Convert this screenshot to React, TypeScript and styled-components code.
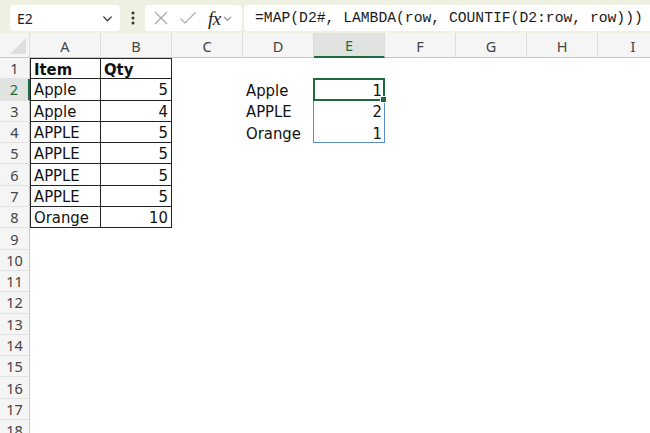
import React from 'react'
import styled, { createGlobalStyle } from 'styled-components'

const GlobalStyle = createGlobalStyle`
  html, body {
    margin: 0;
    padding: 0;
    background: #ffffff;
  }
  body {
    width: 650px;
    height: 433px;
    overflow: hidden;
  }
`

const UI_FONT = `"Noto Sans", "Open Sans", "Liberation Sans", sans-serif`
const CELL_FONT = `"Liberation Sans Narrow", "DejaVu Sans Condensed", "Roboto", sans-serif`

const COL_W = 71
const ROW_H = 21.3
const GREEN = '#1d6b3e'

const Page = styled.div`
  width: 650px;
  height: 433px;
  overflow: hidden;
  display: flex;
  flex-direction: column;
  background: #fff;
`

const Toolbar = styled.div`
  height: 33px;
  flex: none;
  display: flex;
  align-items: flex-start;
  padding: 5px 0 0 10px;
  box-sizing: border-box;
  background: #eef0e2;
`

const Box = styled.div<{ $w?: number }>`
  height: 26px;
  box-sizing: border-box;
  background: #ffffff;
  border-radius: 4px;
  display: flex;
  align-items: center;
  ${(p) => (p.$w ? `width: ${p.$w}px; flex: none;` : 'flex: 1; border-radius: 4px 0 0 4px;')}
`

const NameBox = styled(Box)`
  justify-content: space-between;
  padding: 0 6px 0 7px;
  font-family: ${UI_FONT};
  font-size: 14px;
  color: #222;
`

const Dots = styled.div`
  width: 25px;
  flex: none;
  height: 26px;
  display: flex;
  align-items: center;
  justify-content: center;
`

const FxBox = styled(Box)`
  padding: 0 4px 0 8px;
  gap: 10px;
  margin-right: 2px;
`

const FxGroup = styled.span`
  display: flex;
  align-items: center;
  gap: 1px;
`

const FxLabel = styled.span`
  font-family: "Liberation Serif", serif;
  font-style: italic;
  font-size: 19px;
  color: #222;
  margin-left: 1px;
  letter-spacing: -0.5px;
  line-height: 1;
`

const FormulaBox = styled(Box)`
  padding-left: 11px;
  font-family: "Liberation Mono", "DejaVu Sans Mono", monospace;
  font-size: 14.7px;
  color: #1a1a1a;
  white-space: nowrap;
  overflow: hidden;
`

const Sheet = styled.div`
  flex: 1;
  display: grid;
  grid-template-columns: 30px repeat(9, ${COL_W}px);
  grid-template-rows: 25px;
  grid-auto-rows: ${ROW_H}px;
  overflow: hidden;
`

const Corner = styled.div`
  background: #f5f5f5;
  border-bottom: 1px solid #c8c8c8;
  border-right: 1px solid #dcdcdc;
  box-sizing: border-box;
  position: relative;
  &::after {
    content: '';
    position: absolute;
    right: 3px;
    bottom: 3px;
    border-style: solid;
    border-width: 0 0 16px 16px;
    border-color: transparent transparent #dedede transparent;
  }
`

const ColHead = styled.div<{ $active?: boolean }>`
  box-sizing: border-box;
  display: flex;
  align-items: center;
  justify-content: center;
  font-family: ${UI_FONT};
  font-size: 14.5px;
  padding-top: 1px;
  background: ${(p) => (p.$active ? '#e1e3e1' : '#f5f5f5')};
  color: ${(p) => (p.$active ? GREEN : '#444')};
  border-right: 1px solid #dcdcdc;
  border-bottom: ${(p) => (p.$active ? `2px solid ${GREEN}` : '1px solid #c8c8c8')};
`

const RowHead = styled.div<{ $active?: boolean }>`
  box-sizing: border-box;
  display: flex;
  align-items: center;
  justify-content: center;
  font-family: ${UI_FONT};
  font-size: 14.5px;
  background: ${(p) => (p.$active ? '#e1e3e1' : '#f5f5f5')};
  color: ${(p) => (p.$active ? GREEN : '#444')};
  border-bottom: 1px solid #e2e2e2;
  border-right: ${(p) => (p.$active ? `2px solid ${GREEN}` : '1px solid #c8c8c8')};
`

const Cell = styled.div<{ $align?: 'left' | 'right'; $bold?: boolean; $table?: boolean; $top?: boolean; $left?: boolean }>`
  position: relative;
  box-sizing: border-box;
  display: flex;
  align-items: center;
  justify-content: ${(p) => (p.$align === 'right' ? 'flex-end' : 'flex-start')};
  padding: 1px 3px 0 3px;
  font-family: ${CELL_FONT};
  font-size: 16.5px;
  font-weight: ${(p) => (p.$bold ? 700 : 400)};
  color: #111;
  white-space: nowrap;
  ${(p) =>
    p.$table &&
    `
    border-right: 1px solid #222;
    border-bottom: 1px solid #222;
    ${p.$top ? 'border-top: 1px solid #222;' : ''}
    ${p.$left ? 'border-left: 1px solid #222;' : ''}
  `}
`

const Spill = styled.div`
  position: absolute;
  left: -1px;
  top: -1px;
  width: ${COL_W + 1}px;
  height: ${ROW_H * 3 + 1}px;
  border: 1px solid #5b8bd0;
  box-sizing: border-box;
  pointer-events: none;
`

const Selected = styled.div`
  position: absolute;
  left: -1px;
  top: -1px;
  width: ${COL_W + 1}px;
  height: ${ROW_H + 1}px;
  border: 2px solid ${GREEN};
  box-sizing: border-box;
  pointer-events: none;
  &::after {
    content: '';
    position: absolute;
    right: -4px;
    bottom: -4px;
    width: 5px;
    height: 5px;
    background: ${GREEN};
    border: 1px solid #fff;
  }
`

const Chevron = ({ size = 12, color = '#333' }: { size?: number; color?: string }) => (
  <svg width={size} height={size} viewBox="0 0 12 12">
    <path d="M2.5 4.5 L6 8 L9.5 4.5" fill="none" stroke={color} strokeWidth="1.2" strokeLinecap="round" strokeLinejoin="round" />
  </svg>
)

const columns = ['A', 'B', 'C', 'D', 'E', 'F', 'G', 'H', 'I']

type CellData = { v: string; align?: 'left' | 'right'; bold?: boolean }

const tableRows: [string, string][] = [
  ['Apple', '5'],
  ['Apple', '4'],
  ['APPLE', '5'],
  ['APPLE', '5'],
  ['APPLE', '5'],
  ['APPLE', '5'],
  ['Orange', '10'],
]

const uniques: [string, string][] = [
  ['Apple', '1'],
  ['APPLE', '2'],
  ['Orange', '1'],
]

const getCell = (row: number, col: number): CellData | null => {
  if (row === 1 && col === 0) return { v: 'Item', bold: true }
  if (row === 1 && col === 1) return { v: 'Qty', bold: true }
  if (row >= 2 && row <= 8 && col <= 1) {
    const [item, qty] = tableRows[row - 2]
    return col === 0 ? { v: item } : { v: qty, align: 'right' }
  }
  if (row >= 2 && row <= 4 && (col === 3 || col === 4)) {
    const [item, n] = uniques[row - 2]
    return col === 3 ? { v: item } : { v: n, align: 'right' }
  }
  return null
}

const rows = Array.from({ length: 18 }, (_, i) => i + 1)

export default function App() {
  return (
    <Page>
      <GlobalStyle />
      <Toolbar>
        <NameBox $w={110}>
          <span>E2</span>
          <Chevron size={13} />
        </NameBox>
        <Dots>
          <svg width="4" height="14" viewBox="0 0 4 14">
            <circle cx="2" cy="2" r="1.5" fill="#333" />
            <circle cx="2" cy="7" r="1.5" fill="#333" />
            <circle cx="2" cy="12" r="1.5" fill="#333" />
          </svg>
        </Dots>
        <FxBox $w={97}>
          <svg width="16" height="16" viewBox="0 0 16 16">
            <path d="M2 2 L14 14 M14 2 L2 14" stroke="#a8a8a8" strokeWidth="1.2" fill="none" />
          </svg>
          <svg width="18" height="16" viewBox="0 0 18 16">
            <path d="M1.5 8.5 L6 13 L16.5 2.5" stroke="#a8a8a8" strokeWidth="1.2" fill="none" />
          </svg>
          <FxGroup>
            <FxLabel>fx</FxLabel>
            <Chevron size={11} color="#888" />
          </FxGroup>
        </FxBox>
        <FormulaBox>=MAP(D2#, LAMBDA(row, COUNTIF(D2:row, row)))</FormulaBox>
      </Toolbar>
      <Sheet>
        <Corner />
        {columns.map((c) => (
          <ColHead key={c} $active={c === 'E'}>
            {c}
          </ColHead>
        ))}
        {rows.map((r) => (
          <React.Fragment key={r}>
            <RowHead $active={r === 2}>{r}</RowHead>
            {columns.map((c, ci) => {
              const data = getCell(r, ci)
              const inTable = r <= 8 && ci <= 1
              return (
                <Cell
                  key={c}
                  $align={data?.align}
                  $bold={data?.bold}
                  $table={inTable}
                  $top={inTable && r === 1}
                  $left={inTable && ci === 0}
                >
                  {data?.v}
                  {r === 2 && ci === 4 && (
                    <>
                      <Spill />
                      <Selected />
                    </>
                  )}
                </Cell>
              )
            })}
          </React.Fragment>
        ))}
      </Sheet>
    </Page>
  )
}
